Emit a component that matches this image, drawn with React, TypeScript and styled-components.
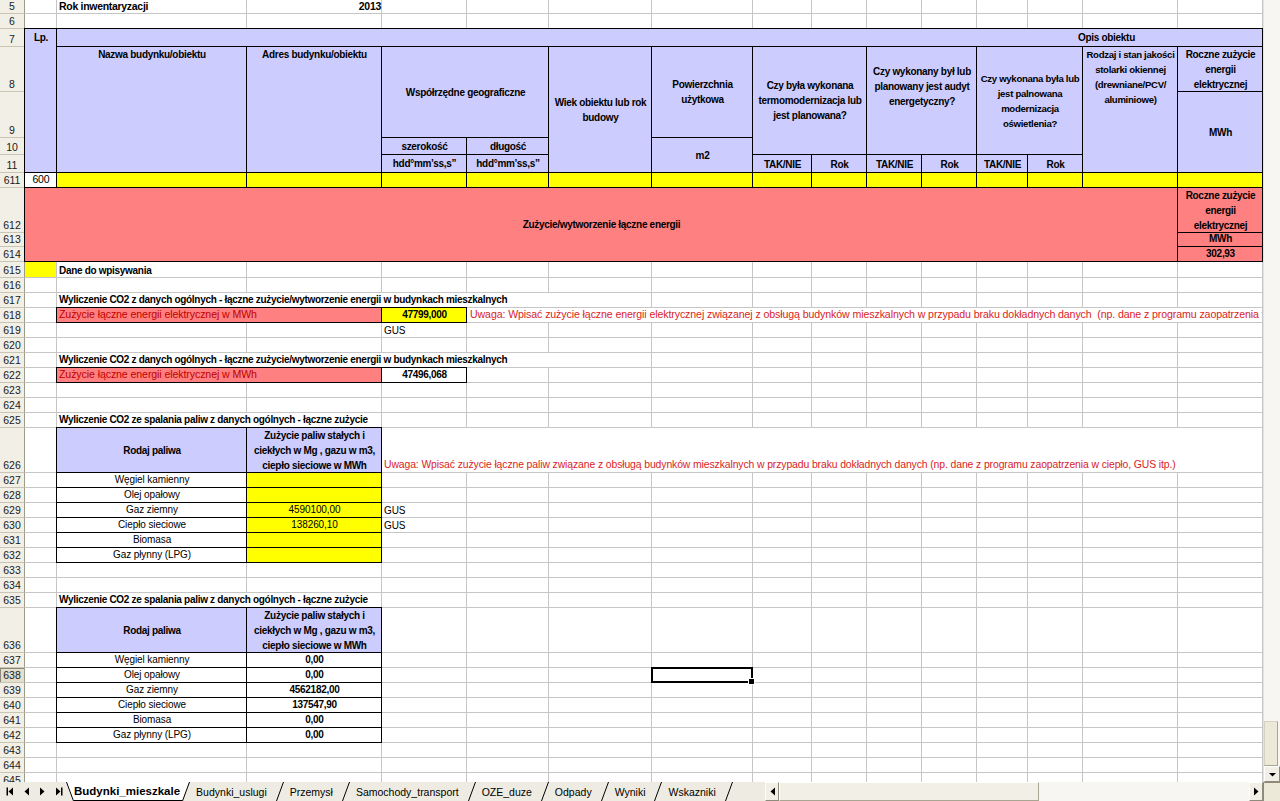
import React from "react";
import styled, { createGlobalStyle, css } from "styled-components";

const GlobalStyle = createGlobalStyle`
  html, body {
    margin: 0;
    padding: 0;
    background: #fff;
    overflow: hidden;
  }
  body {
    font-family: "Liberation Sans", Arial, sans-serif;
  }
`;

const GRID = "#c6c6c6";
const LV = "#ccccff";
const YL = "#ffff00";
const PK = "#ff8080";
const RED = "#c00000";
const WARN = "#d81e1e";

// row header + columns A..O
const COL_WIDTHS = [25, 32, 190, 135, 85, 82, 103, 101, 59, 55, 55, 55, 51, 55, 95, 85];

const ROWS: [string, number][] = [
  ["5", 14],
  ["6", 15],
  ["7", 18],
  ["8", 45],
  ["9", 46],
  ["10", 17],
  ["11", 18],
  ["611", 15],
  ["612", 45],
  ["613", 14],
  ["614", 15],
  ["615", 16],
];
for (let n = 616; n <= 645; n++) ROWS.push([String(n), n === 626 || n === 636 ? 45 : 15]);

const rowIdx = (label: string) => ROWS.findIndex((r) => r[0] === label) + 1;
const colIdx = (letter: string) => letter.charCodeAt(0) - 63;

type Align = "left" | "center" | "right";
type VAlign = "start" | "center" | "end";
type Line = "box" | "grid" | "none";

type Spec = {
  r: string;
  c: string;
  rs?: number;
  cs?: number;
  t?: string;
  bg?: string;
  b?: boolean;
  al?: Align;
  va?: VAlign;
  col?: string;
  line?: Line;
  pt?: number;
  pl?: number;
  fs?: number;
};

const Window = styled.div`
  width: 1280px;
  height: 801px;
  display: flex;
  flex-direction: column;
  overflow: hidden;
`;

const Main = styled.div`
  display: flex;
  height: 782px;
`;

const Sheet = styled.div`
  display: grid;
  grid-template-columns: ${COL_WIDTHS.map((w) => w + "px").join(" ")};
  grid-template-rows: ${ROWS.map((r) => r[1] + "px").join(" ")};
  width: 1263px;
  height: 782px;
  overflow: hidden;
  font-size: 10px;
  color: #000;
`;

const RowHead = styled.div<{ $row: number; $active?: boolean }>`
  grid-row: ${(p) => p.$row};
  grid-column: 1;
  display: flex;
  align-items: flex-end;
  justify-content: center;
  line-height: 14px;
  font-size: 10.5px;
  color: #1a1a1a;
  background: ${(p) => (p.$active ? "#e2dfcf" : "#f2f0e6")};
  border-bottom: 1px solid #c9c5b4;
  border-right: 1px solid #9f9b8b;
  ${(p) =>
    p.$active &&
    css`
      box-shadow: inset 1px 1px 0 #8c887a;
    `}
`;

const Blank = styled.div<{ $r: number; $c: number }>`
  grid-row: ${(p) => p.$r};
  grid-column: ${(p) => p.$c};
  border-right: 1px solid ${GRID};
  border-bottom: 1px solid ${GRID};
`;

const vmap = { start: "flex-start", center: "center", end: "flex-end" };

const Cell = styled.div<{
  $r: number;
  $c: number;
  $rs: number;
  $cs: number;
  $bg: string;
  $bold: boolean;
  $al: Align;
  $va: VAlign;
  $color: string;
  $line: Line;
  $pt: number;
  $pl: number;
  $fs: number;
}>`
  grid-row: ${(p) => p.$r} / span ${(p) => p.$rs};
  grid-column: ${(p) => p.$c} / span ${(p) => p.$cs};
  display: flex;
  flex-direction: column;
  justify-content: ${(p) => vmap[p.$va]};
  text-align: ${(p) => p.$al};
  padding: ${(p) => p.$pt}px 1px 0 ${(p) => p.$pl}px;
  white-space: pre;
  overflow: hidden;
  line-height: 15px;
  font-size: ${(p) => p.$fs}px;
  font-weight: ${(p) => (p.$bold ? 700 : 400)};
  letter-spacing: ${(p) => (p.$bold ? -0.3 : -0.1)}px;
  color: ${(p) => p.$color};
  background: ${(p) => p.$bg};
  ${(p) =>
    p.$line === "box" &&
    css`
      border: 1px solid #000;
      margin: -1px 0 0 -1px;
      position: relative;
      z-index: 1;
    `}
  ${(p) =>
    p.$line === "grid" &&
    css`
      border-right: 1px solid ${GRID};
      border-bottom: 1px solid ${GRID};
    `}
`;

const Selection = styled.div<{ $r: number; $c: number }>`
  grid-row: ${(p) => p.$r};
  grid-column: ${(p) => p.$c};
  margin: -1px 0 0 -1px;
  border: 2px solid #000;
  position: relative;
  z-index: 2;
  &::after {
    content: "";
    position: absolute;
    right: -4px;
    bottom: -4px;
    width: 5px;
    height: 5px;
    background: #000;
    border: 1px solid #fff;
  }
`;

const VScroll = styled.div`
  width: 17px;
  display: flex;
  flex-direction: column;
  background: #f7f6f2;
  border-left: 1px solid #e6e3d8;
  box-sizing: border-box;
`;

const Track = styled.div`
  flex: 1;
`;

const VThumb = styled.div`
  height: 43px;
  background: #ece9d8;
  border: 1px solid #d6d2c2;
  border-right-color: #a9a593;
  border-bottom-color: #a9a593;
  margin-right: 2px;
`;

const ArrowBtn = styled.div<{ $w: number; $h: number }>`
  width: ${(p) => p.$w}px;
  height: ${(p) => p.$h}px;
  display: flex;
  align-items: center;
  justify-content: center;
  background: #f1efe6;
  border: 1px solid #fff;
  border-right-color: #8f8b7c;
  border-bottom-color: #8f8b7c;
  box-sizing: border-box;
  flex: none;
`;

const BottomBar = styled.div`
  display: flex;
  height: 19px;
  background: #eeece2;
  font-family: "Liberation Sans", Arial, sans-serif;
  font-size: 11px;
`;

const TabStrip = styled.div`
  width: 765px;
  display: flex;
  align-items: stretch;
  overflow: hidden;
  flex: none;
  padding-left: 2px;
  box-sizing: border-box;
`;

const NavBtn = styled.div`
  width: 16px;
  display: flex;
  align-items: center;
  justify-content: center;
  flex: none;
`;

const Tab = styled.div<{ $active?: boolean }>`
  display: flex;
  align-items: center;
  padding: 0 ${(p) => (p.$active ? 2 : 9)}px 0 ${(p) => (p.$active ? 0 : 6)}px;
  background: ${(p) => (p.$active ? "#fff" : "transparent")};
  font-weight: ${(p) => (p.$active ? 700 : 400)};
  font-size: ${(p) => (p.$active ? 11.5 : 10.5)}px;
  color: #000;
  white-space: nowrap;
  border-bottom: ${(p) => (p.$active ? "1px solid #000" : "none")};
`;

const SlantSvg = styled.svg`
  flex: none;
  display: block;
`;

const HScroll = styled.div`
  flex: 1;
  display: flex;
  align-items: stretch;
  background: #f7f6f2;
`;

const HThumb = styled.div`
  width: 260px;
  background: #f1efe6;
  border: 1px solid #fff;
  border-right-color: #a9a593;
  border-bottom-color: #a9a593;
  box-sizing: border-box;
`;

const Corner = styled.div`
  width: 17px;
  background: #ece9d8;
  border-left: 1px solid #8f8b7c;
  border-top: 1px solid #8f8b7c;
  box-sizing: border-box;
`;

const Slant = ({ dir, fill }: { dir: "down" | "up"; fill?: boolean }) => (
  <SlantSvg width="8" height="19" viewBox="0 0 8 19">
    {fill && (
      <polygon points={dir === "down" ? "0,0 8,0 8,19 7,19" : "0,0 7,0 0,19"} fill="#fff" />
    )}
    {dir === "down" ? (
      <line x1="0.5" y1="0" x2="7.5" y2="19" stroke="#000" strokeWidth="1" />
    ) : (
      <line x1="0.5" y1="19" x2="7.5" y2="0" stroke="#000" strokeWidth="1" />
    )}
  </SlantSvg>
);

const Tri = ({ dir, bar }: { dir: "l" | "r" | "d"; bar?: boolean }) => (
  <svg width="9" height="9" viewBox="0 0 9 9">
    {dir === "l" && <polygon points="7,0.5 7,8.5 2.5,4.5" fill="#000" />}
    {dir === "r" && <polygon points="2,0.5 2,8.5 6.5,4.5" fill="#000" />}
    {dir === "d" && <polygon points="1,3 8,3 4.5,6.5" fill="#000" />}
    {bar && dir === "l" && <rect x="0.5" y="0.5" width="1.5" height="8" fill="#000" />}
    {bar && dir === "r" && <rect x="7" y="0.5" width="1.5" height="8" fill="#000" />}
  </svg>
);

const WYL1 = "Wyliczenie CO2 z danych ogólnych - łączne zużycie/wytworzenie energii w budynkach mieszkalnych";
const WYL2 = "Wyliczenie CO2 ze spalania paliw z danych ogólnych - łączne zużycie";
const FUEL_HEAD = "Zużycie paliw stałych i\nciekłych w Mg , gazu w m3,\nciepło sieciowe w MWh";
const FUELS = ["Węgiel kamienny", "Olej opałowy", "Gaz ziemny", "Ciepło sieciowe", "Biomasa", "Gaz płynny (LPG)"];
const INPUT_VALUES = ["", "", "4590100,00", "138260,10", "", ""];
const CALC_VALUES = ["0,00", "0,00", "4562182,00", "137547,90", "0,00", "0,00"];

const H = (s: Omit<Spec, "bg" | "line" | "b">): Spec => ({ bg: LV, line: "box", b: true, al: "center", ...s });

const cells: Spec[] = [
  { r: "5", c: "B", t: "Rok inwentaryzacji", b: true, fs: 10.5 },
  { r: "5", c: "C", t: "2013", b: true, al: "right", fs: 10.5 },

  H({ r: "7", c: "A", rs: 5, t: "Lp.", va: "start", pt: 1 }),
  H({ r: "7", c: "B", cs: 14, t: "Opis obiektu", va: "center", al: "left", pl: 1021 }),
  H({ r: "8", c: "B", rs: 4, t: "Nazwa budynku/obiektu", va: "start" }),
  H({ r: "8", c: "C", rs: 4, t: "Adres budynku/obiektu", va: "start" }),
  H({ r: "8", c: "D", rs: 2, cs: 2, t: "Współrzędne geograficzne", va: "center" }),
  H({ r: "10", c: "D", t: "szerokość", va: "center" }),
  H({ r: "10", c: "E", t: "długość", va: "center" }),
  H({ r: "11", c: "D", t: "hdd°mm’ss,s”", va: "center" }),
  H({ r: "11", c: "E", t: "hdd°mm’ss,s”", va: "center" }),
  H({ r: "8", c: "F", rs: 4, t: "Wiek obiektu lub rok\nbudowy", va: "center" }),
  H({ r: "8", c: "G", rs: 2, t: "Powierzchnia\nużytkowa", va: "center" }),
  H({ r: "10", c: "G", rs: 2, t: "m2", va: "center" }),
  H({ r: "8", c: "H", rs: 3, cs: 2, t: "Czy była wykonana\ntermomodernizacja lub\njest planowana?", va: "center" }),
  H({ r: "11", c: "H", t: "TAK/NIE", va: "end" }),
  H({ r: "11", c: "I", t: "Rok", va: "end" }),
  H({ r: "8", c: "J", rs: 3, cs: 2, t: "Czy wykonany był lub\nplanowany jest audyt\nenergetyczny?", va: "start", pt: 17 }),
  H({ r: "11", c: "J", t: "TAK/NIE", va: "end" }),
  H({ r: "11", c: "K", t: "Rok", va: "end" }),
  H({ r: "8", c: "L", rs: 3, cs: 2, t: "Czy wykonana była lub\njest palnowana\nmodernizacja\noświetlenia?", va: "center", fs: 9.6 }),
  H({ r: "11", c: "L", t: "TAK/NIE", va: "end" }),
  H({ r: "11", c: "M", t: "Rok", va: "end" }),
  H({ r: "8", c: "N", rs: 4, t: "Rodzaj i stan jakości\nstolarki okiennej\n(drewniane/PCV/\naluminiowe)", va: "start", fs: 9.6 }),
  H({ r: "8", c: "O", t: "Roczne zużycie\nenergii\nelektrycznej", va: "start" }),
  H({ r: "9", c: "O", rs: 3, t: "MWh", va: "center" }),

  { r: "611", c: "A", t: "600", bg: "#fff", line: "box", al: "center", fs: 10.5 },
  ..."BCDEFGHIJKLMNO".split("").map((c): Spec => ({ r: "611", c, bg: YL, line: "box" })),

  { r: "612", c: "A", rs: 3, cs: 14, t: "Zużycie/wytworzenie łączne energii", bg: PK, line: "box", b: true, al: "center", va: "center" },
  { r: "612", c: "O", t: "Roczne zużycie\nenergii\nelektrycznej", bg: PK, line: "box", b: true, al: "center", va: "start" },
  { r: "613", c: "O", t: "MWh", bg: PK, line: "box", b: true, al: "center" },
  { r: "614", c: "O", t: "302,93", bg: PK, line: "box", b: true, al: "center" },

  { r: "615", c: "A", bg: YL, line: "grid" },
  { r: "615", c: "B", t: "Dane do wpisywania", b: true },

  { r: "617", c: "B", cs: 5, t: WYL1, b: true, bg: "#fff", line: "grid" },
  { r: "618", c: "B", cs: 2, t: "Zużycie łączne energii elektrycznej w MWh", bg: PK, col: RED, line: "box", fs: 10.6 },
  { r: "618", c: "D", t: "47799,000", bg: YL, b: true, line: "box", al: "center" },
  {
    r: "618",
    c: "E",
    cs: 11,
    t: "Uwaga: Wpisać zużycie łączne energii elektrycznej związanej z obsługą budynków mieszkalnych w przypadu braku dokładnych danych  (np. dane z programu zaopatrzenia w ciepło, GUS itp.)",
    col: WARN,
    bg: "#fff",
    line: "grid",
    pl: 3,
    fs: 10.6,
  },
  { r: "619", c: "D", t: "GUS" },

  { r: "621", c: "B", cs: 5, t: WYL1, b: true, bg: "#fff", line: "grid" },
  { r: "622", c: "B", cs: 2, t: "Zużycie łączne energii elektrycznej w MWh", bg: PK, col: RED, line: "box", fs: 10.6 },
  { r: "622", c: "D", t: "47496,068", bg: "#fff", b: true, line: "box", al: "center" },

  { r: "625", c: "B", cs: 2, t: WYL2, b: true, bg: "#fff", line: "grid" },
  H({ r: "626", c: "B", t: "Rodaj paliwa", va: "center" }),
  H({ r: "626", c: "C", t: FUEL_HEAD, va: "center" }),
  {
    r: "626",
    c: "D",
    cs: 12,
    t: "Uwaga: Wpisać zużycie łączne paliw związane z obsługą budynków mieszkalnych w przypadu braku dokładnych danych (np. dane z programu zaopatrzenia w ciepło, GUS itp.)",
    col: WARN,
    bg: "#fff",
    line: "grid",
    fs: 10.4,
  },
  ...FUELS.flatMap((name, i): Spec[] => [
    { r: String(627 + i), c: "B", t: name, bg: "#fff", line: "box", al: "center" },
    { r: String(627 + i), c: "C", t: INPUT_VALUES[i], bg: YL, line: "box", al: "center" },
  ]),
  { r: "629", c: "D", t: "GUS" },
  { r: "630", c: "D", t: "GUS" },

  { r: "635", c: "B", cs: 2, t: WYL2, b: true, bg: "#fff", line: "grid" },
  H({ r: "636", c: "B", t: "Rodaj paliwa", va: "center" }),
  H({ r: "636", c: "C", t: FUEL_HEAD, va: "center" }),
  ...FUELS.flatMap((name, i): Spec[] => [
    { r: String(637 + i), c: "B", t: name, bg: "#fff", line: "box", al: "center" },
    { r: String(637 + i), c: "C", t: CALC_VALUES[i], bg: "#fff", b: true, line: "box", al: "center" },
  ]),
];

const TABS = ["Budynki_uslugi", "Przemysł", "Samochody_transport", "OZE_duze", "Odpady", "Wyniki", "Wskazniki"];

const App = () => {
  const blanks: React.ReactNode[] = [];
  ROWS.forEach((_, i) => {
    for (let c = 2; c <= 16; c++) blanks.push(<Blank key={`${i}-${c}`} $r={i + 1} $c={c} />);
  });

  return (
    <Window>
      <GlobalStyle />
      <Main>
        <Sheet>
          {ROWS.map(([label], i) => (
            <RowHead key={label} $row={i + 1} $active={label === "638"}>
              {label}
            </RowHead>
          ))}
          {blanks}
          {cells.map((s, i) => (
            <Cell
              key={i}
              $r={rowIdx(s.r)}
              $c={colIdx(s.c)}
              $rs={s.rs ?? 1}
              $cs={s.cs ?? 1}
              $bg={s.bg ?? "transparent"}
              $bold={!!s.b}
              $al={s.al ?? "left"}
              $va={s.va ?? "end"}
              $color={s.col ?? "#000"}
              $line={s.line ?? "none"}
              $pt={s.pt ?? 0}
              $pl={s.pl ?? 2}
              $fs={s.fs ?? 10}
            >
              {s.t}
            </Cell>
          ))}
          <Selection $r={rowIdx("638")} $c={colIdx("G")} />
        </Sheet>
        <VScroll>
          <Track />
          <VThumb />
          <ArrowBtn $w={16} $h={16}>
            <Tri dir="d" />
          </ArrowBtn>
        </VScroll>
      </Main>
      <BottomBar>
        <TabStrip>
          <NavBtn>
            <Tri dir="l" bar />
          </NavBtn>
          <NavBtn>
            <Tri dir="l" />
          </NavBtn>
          <NavBtn>
            <Tri dir="r" />
          </NavBtn>
          <NavBtn>
            <Tri dir="r" bar />
          </NavBtn>
          <Slant dir="down" fill />
          <Tab $active>Budynki_mieszkale</Tab>
          <Slant dir="up" fill />
          {TABS.map((t) => (
            <React.Fragment key={t}>
              <Tab>{t}</Tab>
              <Slant dir="up" />
            </React.Fragment>
          ))}
        </TabStrip>
        <HScroll>
          <ArrowBtn $w={14} $h={19}>
            <Tri dir="l" />
          </ArrowBtn>
          <HThumb />
          <Track />
          <ArrowBtn $w={14} $h={19}>
            <Tri dir="r" />
          </ArrowBtn>
        </HScroll>
        <Corner />
      </BottomBar>
    </Window>
  );
};

export default App;
